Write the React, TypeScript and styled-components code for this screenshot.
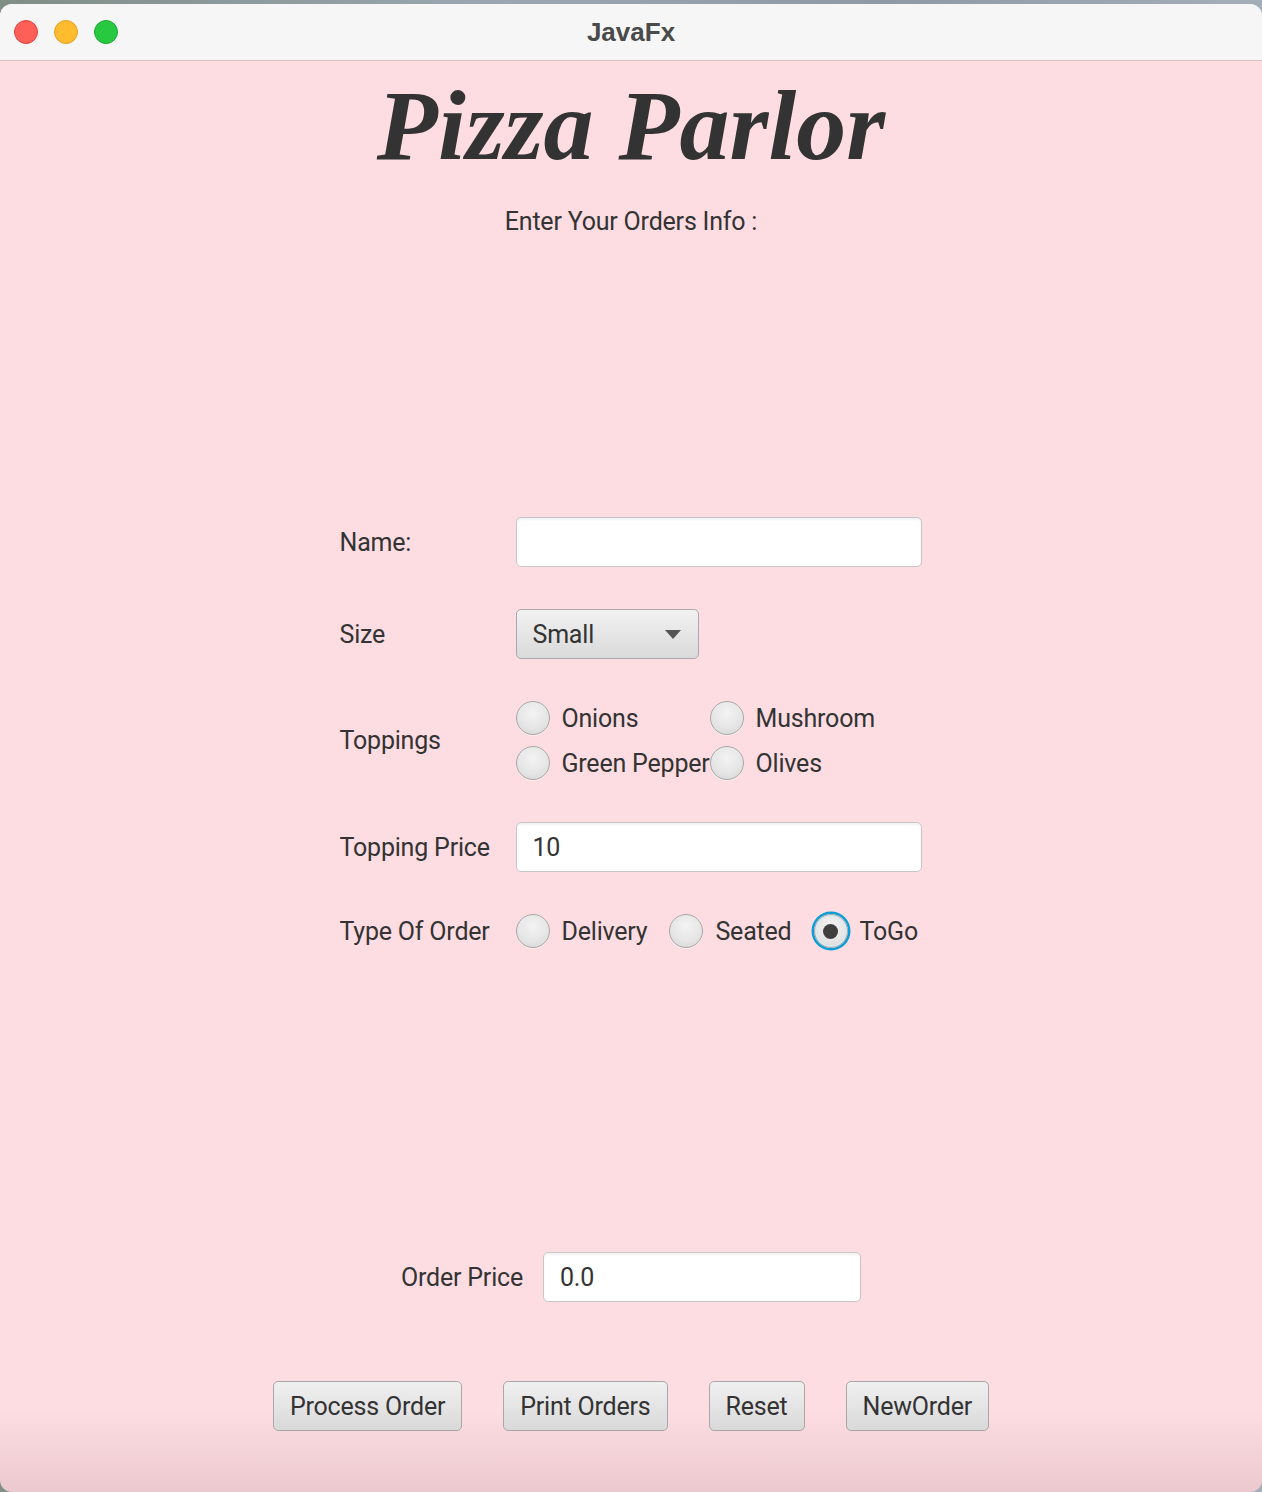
import React from "react";
import styled, { createGlobalStyle } from "styled-components";

const GlobalStyle = createGlobalStyle`
  html, body { margin: 0; padding: 0; }
  body {
    background: linear-gradient(90deg, #7f8f86 0%, #9aa7b3 40%, #8d9aa6 70%, #a3aeb8 100%);
    font-family: Roboto, "Liberation Sans", sans-serif;
    color: #333;
  }
  * { box-sizing: border-box; }
`;

const Window = styled.div`
  width: 1262px;
  height: 1488px;
  margin-top: 4px;
  border-radius: 12px;
  overflow: hidden;
  display: flex;
  flex-direction: column;
  background: linear-gradient(
    to bottom,
    #fddde2 0,
    #fddde2 calc(100% - 80px),
    #ebc9ce 100%
  );
`;

const TitleBar = styled.div`
  height: 57px;
  flex: none;
  display: grid;
  grid-template-columns: 1fr auto 1fr;
  align-items: center;
  background: #f6f6f6;
  border-bottom: 1px solid #d9c0c4;
`;

const Lights = styled.div`
  display: flex;
  gap: 16px;
  padding-left: 14px;
`;

const Light = styled.span<{ $fill: string; $edge: string }>`
  width: 24px;
  height: 24px;
  border-radius: 50%;
  background: ${(p) => p.$fill};
  border: 1px solid ${(p) => p.$edge};
`;

const WindowTitle = styled.div`
  font-family: "Liberation Sans", Arial, sans-serif;
  font-weight: 700;
  font-size: 26px;
  color: #4a4a4a;
`;

const Content = styled.div`
  display: flex;
  flex-direction: column;
  align-items: center;
`;

const Heading = styled.h1`
  margin: 15px 0 0;
  font-family: "Liberation Serif", "Times New Roman", serif;
  font-style: italic;
  font-weight: 700;
  font-size: 100px;
  line-height: 100px;
  color: #333;
`;

const Subtitle = styled.div`
  margin-top: 31px;
  font-size: 25px;
  line-height: 30px;
  letter-spacing: -0.2px;
  color: #333;
`;

const Form = styled.div`
  margin-top: 280px;
  width: 582px;
  margin-right: 1px;
  display: grid;
  grid-template-columns: 176px 406px;
  row-gap: 42px;
  align-items: center;
`;

const Label = styled.div`
  font-size: 25px;
  letter-spacing: -0.2px;
  color: #333;
`;

const TextField = styled.input<{ $width: number }>`
  width: ${(p) => p.$width}px;
  height: 50px;
  padding: 0 16px;
  border: 1px solid #c6c6c6;
  border-radius: 5px;
  background: #fff;
  box-shadow: inset 0 2px 2px rgba(0, 0, 0, 0.05);
  font-family: Roboto, "Liberation Sans", sans-serif;
  font-size: 25px;
  letter-spacing: -0.2px;
  color: #333;
  outline: none;
`;

const Combo = styled.div`
  width: 183px;
  height: 50px;
  padding: 0 17px 0 16px;
  display: flex;
  align-items: center;
  justify-content: space-between;
  border: 1px solid #a9a9a9;
  border-radius: 5px;
  background: linear-gradient(to bottom, #f2f2f2, #dadada);
  font-size: 25px;
  letter-spacing: -0.2px;
  color: #333;
`;

const Arrow = styled.span`
  width: 0;
  height: 0;
  border-left: 8px solid transparent;
  border-right: 8px solid transparent;
  border-top: 9px solid #555;
`;

const ToppingGrid = styled.div`
  display: grid;
  grid-template-columns: auto auto;
  justify-content: start;
  row-gap: 11px;
`;

const OrderTypes = styled.div`
  display: flex;
  gap: 22px;
`;

const RadioOption = styled.label`
  display: flex;
  align-items: center;
  gap: 12px;
  font-size: 25px;
  letter-spacing: -0.2px;
  color: #333;
  height: 34px;
`;

const RadioCircle = styled.span<{ $checked?: boolean }>`
  width: 34px;
  height: 34px;
  border-radius: 50%;
  flex: none;
  display: flex;
  align-items: center;
  justify-content: center;
  border: 1.5px solid #a8a8a8;
  background: radial-gradient(circle at 50% 35%, #f3f3f3 0%, #e6e6e6 55%, #d4d4d4 100%);
  box-shadow: ${(p) =>
    p.$checked
      ? "0 0 0 2.5px #0a9fd6, inset 0 0 0 1.5px #d6ecf4"
      : "0 1px 0 rgba(255,255,255,0.5)"};
`;

const Dot = styled.span`
  width: 15px;
  height: 15px;
  border-radius: 50%;
  background: #3f3f3f;
`;

const PriceRow = styled.div`
  margin-top: 304px;
  display: flex;
  align-items: center;
  gap: 20px;
`;

const ButtonRow = styled.div`
  margin-top: 79px;
  display: flex;
  gap: 41px;
`;

const Button = styled.button`
  height: 50px;
  padding: 0 16px;
  border: 1px solid #a8a8a8;
  border-radius: 5px;
  background: linear-gradient(to bottom, #f0f0f0, #d9d9d9);
  font-family: Roboto, "Liberation Sans", sans-serif;
  font-size: 25px;
  letter-spacing: -0.2px;
  color: #333;
`;

const Radio = ({ label, checked }: { label: string; checked?: boolean }) => (
  <RadioOption>
    <RadioCircle $checked={checked}>{checked && <Dot />}</RadioCircle>
    {label}
  </RadioOption>
);

export default function App() {
  return (
    <>
      <GlobalStyle />
      <Window>
        <TitleBar>
          <Lights>
            <Light $fill="#fe5f57" $edge="#e2463f" />
            <Light $fill="#febc2e" $edge="#e0a028" />
            <Light $fill="#28c840" $edge="#1ca932" />
          </Lights>
          <WindowTitle>JavaFx</WindowTitle>
          <div />
        </TitleBar>
        <Content>
          <Heading>Pizza Parlor</Heading>
          <Subtitle>Enter Your Orders Info :</Subtitle>
          <Form>
            <Label>Name:</Label>
            <TextField $width={406} readOnly value="" />
            <Label>Size</Label>
            <Combo>
              Small
              <Arrow />
            </Combo>
            <Label>Toppings</Label>
            <ToppingGrid>
              <Radio label="Onions" />
              <Radio label="Mushroom" />
              <Radio label="Green Pepper" />
              <Radio label="Olives" />
            </ToppingGrid>
            <Label>Topping Price</Label>
            <TextField $width={406} readOnly value="10" />
            <Label>Type Of Order</Label>
            <OrderTypes>
              <Radio label="Delivery" />
              <Radio label="Seated" />
              <Radio label="ToGo" checked />
            </OrderTypes>
          </Form>
          <PriceRow>
            <Label>Order Price</Label>
            <TextField $width={318} readOnly value="0.0" />
          </PriceRow>
          <ButtonRow>
            <Button>Process Order</Button>
            <Button>Print Orders</Button>
            <Button>Reset</Button>
            <Button>NewOrder</Button>
          </ButtonRow>
        </Content>
      </Window>
    </>
  );
}
